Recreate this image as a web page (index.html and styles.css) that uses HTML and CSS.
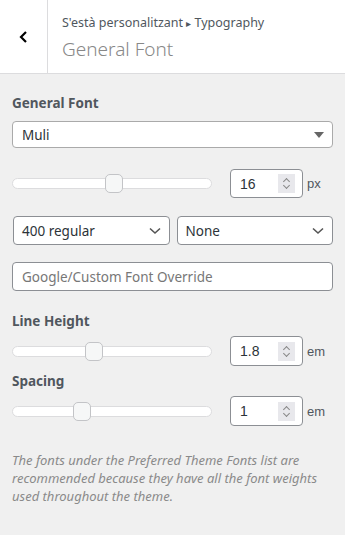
FILE: index.html
```html
<!DOCTYPE html>
<html lang="ca">
<head>
  <meta charset="UTF-8">
  <meta name="viewport" content="width=device-width, initial-scale=1.0">
  <title>General Font</title>
  <link rel="stylesheet" href="styles.css">
</head>
<body>

<div class="cabecera">
  <div class="boton-atras">
    <svg width="12" height="14" viewBox="0 0 12 14"><path d="M8 2 L3 7 L8 12" fill="none" stroke="#000" stroke-width="2.2"/></svg>
  </div>
  <div class="titulos">
    <div class="migas">S'està personalitzant <span class="flecha">&#9656;</span> Typography</div>
    <div class="titulo">General Font</div>
  </div>
</div>

<div class="contenido">
  <div class="etiqueta">General Font</div>
  <div class="caja selector-grande">
    <span>Muli</span>
    <svg width="10" height="6" viewBox="0 0 10 6"><path d="M0 0 H10 L5 6 Z" fill="#666"/></svg>
  </div>

  <div class="fila-rango">
    <div class="pista"><div class="pulgar" style="left: 92px"></div></div>
    <div class="numero"><span>16</span><span class="flechas"></span></div>
    <span class="unidad">px</span>
  </div>

  <div class="fila-doble">
    <div class="caja selector">
      <span>400 regular</span>
      <svg width="12" height="8" viewBox="0 0 12 8"><path d="M1 1.5 L6 6 L11 1.5" fill="none" stroke="#555" stroke-width="1.6"/></svg>
    </div>
    <div class="caja selector">
      <span>None</span>
      <svg width="12" height="8" viewBox="0 0 12 8"><path d="M1 1.5 L6 6 L11 1.5" fill="none" stroke="#555" stroke-width="1.6"/></svg>
    </div>
  </div>

  <div class="caja texto">Google/Custom Font Override</div>

  <div class="etiqueta etiqueta-rango">Line Height</div>
  <div class="fila-rango pegada">
    <div class="pista"><div class="pulgar" style="left: 72px"></div></div>
    <div class="numero"><span>1.8</span><span class="flechas"></span></div>
    <span class="unidad">em</span>
  </div>

  <div class="etiqueta etiqueta-rango">Spacing</div>
  <div class="fila-rango pegada">
    <div class="pista"><div class="pulgar" style="left: 60px"></div></div>
    <div class="numero"><span>1</span><span class="flechas"></span></div>
    <span class="unidad">em</span>
  </div>

  <p class="descripcion">The fonts under the Preferred Theme Fonts list are recommended because they have all the font weights used throughout the theme.</p>
</div>

</body>
</html>
```

FILE: styles.css
```css
body {
  margin: 0;
  padding: 0;
  background-color: #f0f0f0;
  font-family: "Noto Sans", sans-serif;
  color: #3c434a;
}
.cabecera {
  display: flex;
  height: 73px;
  background-color: #fff;
  border-bottom: 1px solid #dcdcde;
}
.boton-atras {
  width: 47px;
  border-right: 1px solid #dcdcde;
  display: flex;
  align-items: center;
  justify-content: center;
}
.titulos {
  padding: 14px 0 0 14px;
}
.migas {
  font-size: 12.5px;
  color: #50575e;
  line-height: 18px;
}
.flecha {
  font-size: 10px;
}
.titulo {
  font-size: 19px;
  font-weight: 300;
  color: #888;
  margin-top: 5px;
  line-height: 24px;
}
.contenido {
  padding: 20px 12px 12px 12px;
}
.etiqueta {
  font-size: 13.5px;
  font-weight: bold;
  color: #50575e;
  line-height: 18px;
  margin-bottom: 9px;
}
.caja {
  box-sizing: border-box;
  background-color: #fff;
  border: 1px solid #8c8f94;
  border-radius: 4px;
  height: 27px;
  font-size: 13.5px;
  color: #2c3338;
  display: flex;
  align-items: center;
  justify-content: space-between;
  padding: 0 8px 0 9px;
}
.selector-grande {
  border-color: #aaa;
}
.fila-rango {
  display: flex;
  align-items: center;
  margin-top: 21px;
}
.fila-rango.pegada {
  margin-top: 0;
}
.pista {
  position: relative;
  width: 200px;
  height: 11px;
  box-sizing: border-box;
  background-color: #fff;
  border: 1px solid #dcdcde;
  border-radius: 6px;
}
.pulgar {
  position: absolute;
  top: -5px;
  width: 18px;
  height: 19px;
  box-sizing: border-box;
  background-color: #f6f7f7;
  border: 1px solid #c3c4c7;
  border-radius: 5px;
}
.numero {
  box-sizing: border-box;
  margin-left: 18px;
  width: 73px;
  height: 29px;
  background-color: #fff;
  border: 1px solid #8c8f94;
  border-radius: 4px;
  display: flex;
  align-items: center;
  justify-content: space-between;
  padding: 0 7px 0 9px;
  font-family: "Liberation Sans", Arial, sans-serif;
  font-size: 14px;
  color: #2c3338;
}
.pegada .numero {
  height: 30px;
}
.flechas {
  width: 17px;
  height: 19px;
  background-color: #e8e8ec;
  position: relative;
}
.flechas::before,
.flechas::after {
  content: "";
  position: absolute;
  left: 6px;
  width: 4px;
  height: 4px;
  border-left: 1px solid #888;
  border-top: 1px solid #888;
}
.flechas::before {
  top: 5px;
  transform: rotate(45deg);
}
.flechas::after {
  top: 9px;
  transform: rotate(225deg);
}
.unidad {
  margin-left: 4px;
  font-family: "Liberation Sans", Arial, sans-serif;
  font-size: 13px;
  color: #50575e;
}
.fila-doble {
  display: flex;
  gap: 7px;
  margin-top: 18px;
  padding-left: 1px;
}
.selector {
  flex: 1;
  height: 29px;
  padding: 0 8px 0 8px;
  border-color: #8c8f94;
}
.texto {
  margin-top: 17px;
  height: 29px;
  color: #777;
}
.etiqueta-rango {
  margin-top: 21px;
  margin-bottom: 6px;
}
.etiqueta-rango + .fila-rango + .etiqueta-rango {
  margin-top: 6px;
}
.descripcion {
  margin: 25px 0 0 0;
  font-size: 13px;
  font-style: italic;
  line-height: 18px;
  color: #8a8a8a;
}
```
